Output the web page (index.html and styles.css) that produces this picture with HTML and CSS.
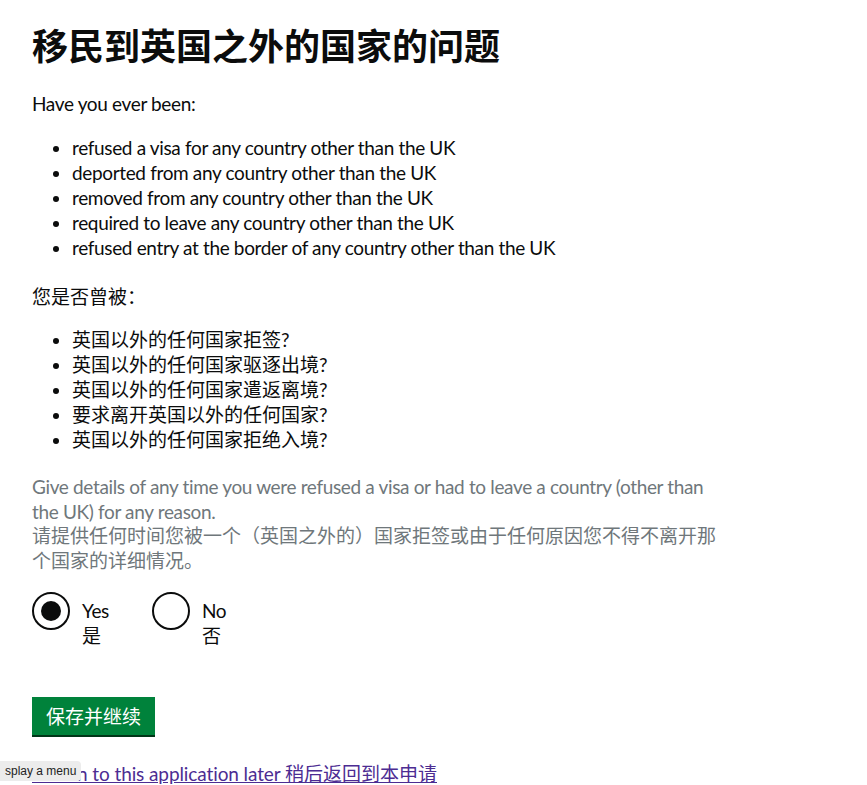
FILE: index.html
```html
<!DOCTYPE html>
<html lang="zh-CN">
<head>
  <meta charset="UTF-8">
  <title>移民到英国之外的国家的问题</title>
  <link rel="stylesheet" href="styles.css">
</head>
<body>
<main class="page">
  <h1 class="heading">移民到英国之外的国家的问题</h1>

  <p class="body-text">Have you ever been:</p>
  <ul class="bullets">
    <li>refused a visa for any country other than the UK</li>
    <li>deported from any country other than the UK</li>
    <li>removed from any country other than the UK</li>
    <li>required to leave any country other than the UK</li>
    <li>refused entry at the border of any country other than the UK</li>
  </ul>

  <p class="body-text zh">您是否曾被：</p>
  <ul class="bullets bullets-zh zh">
    <li>英国以外的任何国家拒签?</li>
    <li>英国以外的任何国家驱逐出境?</li>
    <li>英国以外的任何国家遣返离境?</li>
    <li>要求离开英国以外的任何国家?</li>
    <li>英国以外的任何国家拒绝入境?</li>
  </ul>

  <form class="question">
    <p class="hint">Give details of any time you were refused a visa or had to leave a country (other than the UK) for any reason.<br><span class="zh">请提供任何时间您被一个（英国之外的）国家拒签或由于任何原因您不得不离开那个国家的详细情况。</span></p>

    <div class="radios">
      <label class="radio">
        <input type="radio" name="refused" value="yes" checked>
        <span class="radio-mark"></span>
        <span class="radio-label">Yes<br>是</span>
      </label>
      <label class="radio">
        <input type="radio" name="refused" value="no">
        <span class="radio-mark"></span>
        <span class="radio-label">No<br>否</span>
      </label>
    </div>

    <button type="button" class="button zh">保存并继续</button>
  </form>

  <div class="later">
    <a href="#" class="link">Return to this application later <span class="zh">稍后返回到本申请</span></a>
    <span class="tooltip">splay a menu</span>
  </div>
</main>
</body>
</html>
```

FILE: styles.css
```css
body {
  margin: 0;
  font-family: Lato, "Noto Sans CJK SC", sans-serif;
  letter-spacing: -0.35px;
  color: #0b0c0c;
  background: #fff;
}

.zh {
  letter-spacing: 0;
}

.page {
  padding: 0 32px;
}

.heading {
  margin: 27px 0 0;
  font-family: "Noto Sans", "Noto Sans CJK SC", sans-serif;
  font-size: 36px;
  line-height: 40px;
  font-weight: 700;
  letter-spacing: 0;
}

.body-text {
  margin: 24px 0 0;
  font-size: 19px;
  line-height: 25px;
}

.bullets {
  margin: 19px 0 0;
  padding-left: 40px;
  font-size: 19px;
  line-height: 25px;
}

.bullets-zh {
  margin-top: 18px;
}

.hint {
  width: 700px;
  margin: 23px 0 0;
  font-size: 19px;
  line-height: 24.7px;
  color: #6f777b;
}

.radios {
  display: flex;
  margin-top: 18px;
}

.radio {
  display: flex;
  gap: 12px;
  margin-right: 28px;
  cursor: pointer;
}

.radio input {
  display: none;
}

.radio-mark {
  width: 34px;
  height: 34px;
  border: 2px solid #0b0c0c;
  border-radius: 50%;
  display: flex;
  align-items: center;
  justify-content: center;
}

.radio input:checked + .radio-mark::after {
  content: "";
  width: 20px;
  height: 20px;
  border-radius: 50%;
  background: #0b0c0c;
}

.radio-label {
  padding: 6px 15px 0 0;
  font-size: 19px;
  line-height: 25px;
}

.button {
  display: block;
  margin-top: 49px;
  padding: 6px 14px 5px;
  border: 0;
  background: #00823b;
  box-shadow: 0 2px 0 #003618;
  color: #fff;
  font-family: inherit;
  font-size: 19px;
  line-height: 27px;
}

.later {
  margin-top: 26px;
  position: relative;
  font-size: 19px;
  line-height: 25px;
}

.link {
  color: #4c2c92;
  letter-spacing: -0.1px;
}

.tooltip {
  position: absolute;
  left: -32px;
  top: 0;
  padding: 2px 5px;
  background: #ececec;
  border-radius: 0 4px 4px 0;
  font-family: "Liberation Sans", sans-serif;
  font-size: 12px;
  line-height: 16px;
  letter-spacing: 0;
  color: #222;
}
```
